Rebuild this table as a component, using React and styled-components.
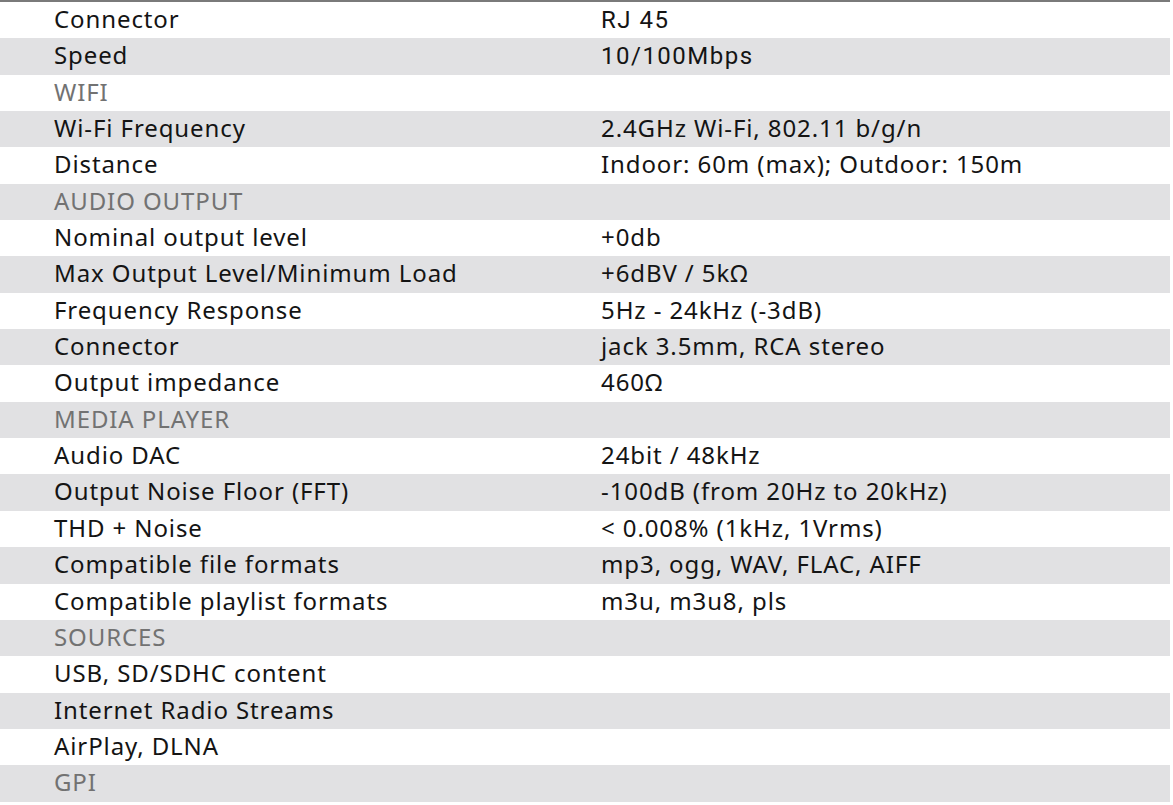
import React from 'react';
import styled, { createGlobalStyle } from 'styled-components';

const GlobalStyle = createGlobalStyle`
  body {
    margin: 0;
    background: #fff;
    font-family: 'Noto Sans', 'Lato', sans-serif;
  }
`;

const Table = styled.div`
  width: 1170px;
  border-top: 2px solid #7a7a7a;
`;

const Row = styled.div`
  display: grid;
  grid-template-columns: 601px 1fr;
  height: 36.35px;
  line-height: 33px;
  align-items: start;
  background: ${(props) => (props.shaded ? '#e1e1e3' : '#fff')};
  font-size: 24px;
  letter-spacing: 0.9px;
  color: ${(props) => (props.section ? '#727272' : '#141414')};
`;

const Label = styled.div`
  padding-left: 54px;
  white-space: nowrap;
`;

const Value = styled.div`
  white-space: nowrap;
  font-family: ${(props) => (props.alt ? "'Roboto', sans-serif" : 'inherit')};
  letter-spacing: ${(props) => (props.alt ? '1.5px' : 'inherit')};
  padding-top: ${(props) => (props.alt ? '2px' : '0')};
`;

const rows = [
  ['Connector', 'RJ 45', false, true],
  ['Speed', '10/100Mbps', false, true],
  ['WIFI', '', true],
  ['Wi-Fi Frequency', '2.4GHz Wi-Fi, 802.11 b/g/n'],
  ['Distance', 'Indoor: 60m (max); Outdoor: 150m'],
  ['AUDIO OUTPUT', '', true],
  ['Nominal output level', '+0db'],
  ['Max Output Level/Minimum Load', '+6dBV / 5kΩ'],
  ['Frequency Response', '5Hz - 24kHz (-3dB)'],
  ['Connector', 'jack 3.5mm, RCA stereo'],
  ['Output impedance', '460Ω'],
  ['MEDIA PLAYER', '', true],
  ['Audio DAC', '24bit / 48kHz'],
  ['Output Noise Floor (FFT)', '-100dB (from 20Hz to 20kHz)'],
  ['THD + Noise', '< 0.008% (1kHz, 1Vrms)'],
  ['Compatible file formats', 'mp3, ogg, WAV, FLAC, AIFF'],
  ['Compatible playlist formats', 'm3u, m3u8, pls'],
  ['SOURCES', '', true],
  ['USB, SD/SDHC content', ''],
  ['Internet Radio Streams', ''],
  ['AirPlay, DLNA', ''],
  ['GPI', '', true],
];

export default function App() {
  return (
    <>
      <GlobalStyle />
      <Table>
        {rows.map(([label, value, section, alt], i) => (
          <Row key={i} shaded={i % 2 === 1} section={section}>
            <Label>{label}</Label>
            <Value alt={alt}>{value}</Value>
          </Row>
        ))}
      </Table>
    </>
  );
}
